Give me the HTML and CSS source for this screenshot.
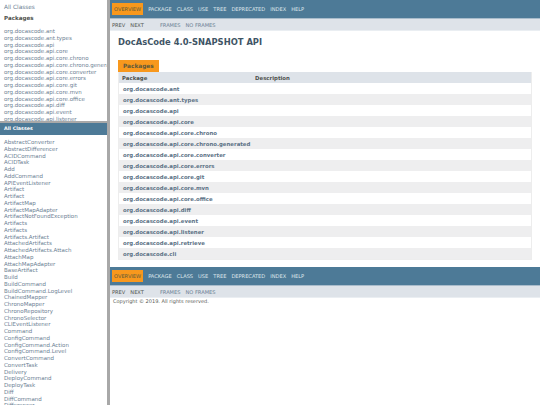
FILE: index.html
```html
<!DOCTYPE html>
<html lang="en">
<head>
    <meta charset="UTF-8">
    <title>Overview (DocAsCode 4.0-SNAPSHOT API)</title>
    <link rel="stylesheet" href="styles.css">
</head>
<body>
    <div class="frames">
        <div class="side">
            <div class="package-frame">
                <div class="all-link">All Classes</div>
                <h2 class="side-title">Packages</h2>
                <ul class="side-list">
                    <li>org.docascode.ant</li>
                    <li>org.docascode.ant.types</li>
                    <li>org.docascode.api</li>
                    <li>org.docascode.api.core</li>
                    <li>org.docascode.api.core.chrono</li>
                    <li>org.docascode.api.core.chrono.generated</li>
                    <li>org.docascode.api.core.converter</li>
                    <li>org.docascode.api.core.errors</li>
                    <li>org.docascode.api.core.git</li>
                    <li>org.docascode.api.core.mvn</li>
                    <li>org.docascode.api.core.office</li>
                    <li>org.docascode.api.diff</li>
                    <li>org.docascode.api.event</li>
                    <li>org.docascode.api.listener</li>
                </ul>
            </div>
            <div class="class-frame">
                <div class="class-bar">All Classes</div>
                <ul class="side-list">
                    <li>AbstractConverter</li>
                    <li>AbstractDifferencer</li>
                    <li>ACIDCommand</li>
                    <li>ACIDTask</li>
                    <li>Add</li>
                    <li>AddCommand</li>
                    <li>APIEventListener</li>
                    <li>Artifact</li>
                    <li>Artifact</li>
                    <li>ArtifactMap</li>
                    <li>ArtifactMapAdapter</li>
                    <li>ArtifactNotFoundException</li>
                    <li>Artifacts</li>
                    <li>Artifacts</li>
                    <li>Artifacts.Artifact</li>
                    <li>AttachedArtifacts</li>
                    <li>AttachedArtifacts.Attach</li>
                    <li>AttachMap</li>
                    <li>AttachMapAdapter</li>
                    <li>BaseArtifact</li>
                    <li>Build</li>
                    <li>BuildCommand</li>
                    <li>BuildCommand.LogLevel</li>
                    <li>ChainedMapper</li>
                    <li>ChronoMapper</li>
                    <li>ChronoRepository</li>
                    <li>ChronoSelector</li>
                    <li>CLIEventListener</li>
                    <li>Command</li>
                    <li>ConfigCommand</li>
                    <li>ConfigCommand.Action</li>
                    <li>ConfigCommand.Level</li>
                    <li>ConvertCommand</li>
                    <li>ConvertTask</li>
                    <li>Delivery</li>
                    <li>DeployCommand</li>
                    <li>DeployTask</li>
                    <li>Diff</li>
                    <li>DiffCommand</li>
                    <li>Differencer</li>
                </ul>
            </div>
        </div>

        <div class="main">
            <div class="topnav">
                <span class="nav-item active">OVERVIEW</span>
                <span class="nav-item">PACKAGE</span>
                <span class="nav-item">CLASS</span>
                <span class="nav-item">USE</span>
                <span class="nav-item">TREE</span>
                <span class="nav-item">DEPRECATED</span>
                <span class="nav-item">INDEX</span>
                <span class="nav-item">HELP</span>
            </div>
            <div class="subnav">
                <span class="sub-dark">PREV</span>
                <span class="sub-dark">NEXT</span>
                <span class="sub-link first">FRAMES</span>
                <span class="sub-link">NO FRAMES</span>
            </div>

            <h1 class="title">DocAsCode 4.0-SNAPSHOT API</h1>

            <div class="summary">
                <div class="caption">Packages</div>
                <table class="package-table">
                    <tr><th class="col-package">Package</th><th>Description</th></tr>
                    <tr><td>org.docascode.ant</td><td></td></tr>
                    <tr class="alt"><td>org.docascode.ant.types</td><td></td></tr>
                    <tr><td>org.docascode.api</td><td></td></tr>
                    <tr class="alt"><td>org.docascode.api.core</td><td></td></tr>
                    <tr><td>org.docascode.api.core.chrono</td><td></td></tr>
                    <tr class="alt"><td>org.docascode.api.core.chrono.generated</td><td></td></tr>
                    <tr><td>org.docascode.api.core.converter</td><td></td></tr>
                    <tr class="alt"><td>org.docascode.api.core.errors</td><td></td></tr>
                    <tr><td>org.docascode.api.core.git</td><td></td></tr>
                    <tr class="alt"><td>org.docascode.api.core.mvn</td><td></td></tr>
                    <tr><td>org.docascode.api.core.office</td><td></td></tr>
                    <tr class="alt"><td>org.docascode.api.diff</td><td></td></tr>
                    <tr><td>org.docascode.api.event</td><td></td></tr>
                    <tr class="alt"><td>org.docascode.api.listener</td><td></td></tr>
                    <tr><td>org.docascode.api.retrieve</td><td></td></tr>
                    <tr class="alt"><td>org.docascode.cli</td><td></td></tr>
                </table>
            </div>

            <div class="topnav bottom">
                <span class="nav-item active">OVERVIEW</span>
                <span class="nav-item">PACKAGE</span>
                <span class="nav-item">CLASS</span>
                <span class="nav-item">USE</span>
                <span class="nav-item">TREE</span>
                <span class="nav-item">DEPRECATED</span>
                <span class="nav-item">INDEX</span>
                <span class="nav-item">HELP</span>
            </div>
            <div class="subnav">
                <span class="sub-dark">PREV</span>
                <span class="sub-dark">NEXT</span>
                <span class="sub-link first">FRAMES</span>
                <span class="sub-link">NO FRAMES</span>
            </div>
            <p class="legal">Copyright © 2019. All rights reserved.</p>
        </div>
    </div>
</body>
</html>
```

FILE: styles.css
```css
html, body {
    margin: 0;
    height: 100%;
    overflow: hidden;
    background: #fff;
}
body {
    font-family: "DejaVu Sans", sans-serif;
    color: #4f524d;
}
.frames {
    display: flex;
    height: 405px;
}

/* left frames */
.side {
    width: 107px;
    flex: none;
    display: flex;
    flex-direction: column;
    border-right: 3px solid #a8a8a8;
}
.package-frame {
    height: 123px;
    flex: none;
    overflow: hidden;
    padding: 4px 0 0 4px;
    box-sizing: border-box;
    border-bottom: 2px solid #a8a8a8;
}
.all-link {
    font-size: 5.8px;
    line-height: 7px;
    color: #6b8093;
}
.side-title {
    font-size: 5.6px;
    line-height: 7px;
    font-weight: bold;
    color: #4f524d;
    margin: 4px 0 0;
}
.side-list {
    list-style: none;
    margin: 6px 0 0;
    padding: 0;
    font-size: 5.5px;
    line-height: 6.75px;
    color: #6b8093;
    white-space: nowrap;
}
.class-frame {
    flex: 1;
    overflow: hidden;
}
.class-bar {
    height: 12px;
    line-height: 12px;
    padding-left: 4px;
    background: #4d7a97;
    color: #fff;
    font-size: 4.8px;
    font-weight: bold;
}
.class-frame .side-list {
    margin: 4px 0 0 4px;
}

/* main frame */
.main {
    flex: 1;
    min-width: 0;
}
.topnav {
    height: 18px;
    background: #4d7a97;
    border-bottom: 1px solid #a9bccb;
    display: flex;
    align-items: center;
    padding-left: 2px;
    gap: 5px;
    font-size: 5.1px;
    color: #dfe7ec;
}
.nav-item.active {
    background: #f8981d;
    color: #5d5a3c;
    padding: 3px 2px;
}
.subnav {
    height: 11px;
    background: #dee3e9;
    border-bottom: 1px solid #eaeef2;
    display: flex;
    align-items: center;
    padding-left: 2px;
    font-size: 5.1px;
    gap: 5px;
}
.sub-dark {
    color: #4f524d;
}
.sub-link {
    color: #6b8093;
}
.sub-link.first {
    margin-left: 11px;
}
.title {
    font-size: 8.4px;
    line-height: 12px;
    color: #3f5566;
    margin: 5px 0 0 8px;
}
.summary {
    margin: 12px 8px 0 8px;
}
.caption {
    width: fit-content;
    background: #f8981d;
    color: #5d5a3c;
    font-size: 5.8px;
    font-weight: bold;
    line-height: 12px;
    padding: 0 5px;
}
.package-table {
    width: 100%;
    border-collapse: collapse;
    table-layout: fixed;
    border: 1px solid #ededed;
    border-top: 0;
    font-size: 5.4px;
}
.package-table th {
    background: #dee3e9;
    color: #4f524d;
    text-align: left;
    height: 11px;
    padding: 0 0 0 3px;
}
.package-table .col-package {
    width: 130px;
}
.package-table td {
    height: 11px;
    padding: 0 0 0 4px;
    color: #5d7286;
    font-weight: bold;
    white-space: nowrap;
}
.package-table .alt td {
    background: #eeeeef;
}
.bottom {
    margin-top: 7px;
}
.legal {
    font-size: 5px;
    line-height: 7px;
    color: #5a5d58;
    margin: 0 0 0 3px;
}
```
